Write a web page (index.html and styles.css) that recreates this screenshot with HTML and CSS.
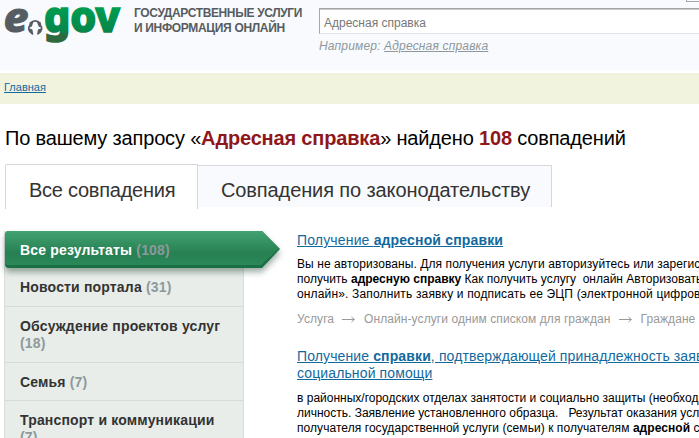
FILE: index.html
```html
<!DOCTYPE html>
<html lang="ru">
<head>
<meta charset="utf-8">
<title>Поиск</title>
<link rel="stylesheet" href="styles.css">
</head>
<body>
<header class="header">
  <svg class="logo" width="122" height="46" viewBox="0 0 122 46">
    <defs>
      <linearGradient id="green" x1="0" y1="7" x2="0" y2="43" gradientUnits="userSpaceOnUse">
        <stop offset="0" stop-color="#009d50"/><stop offset=".67" stop-color="#07864a"/><stop offset=".78" stop-color="#2c693f"/><stop offset="1" stop-color="#2c693f"/>
      </linearGradient>
    </defs>
    <text class="logo-e" x="3.500" y="32" textLength="25" lengthAdjust="spacingAndGlyphs">e</text>
    <text class="logo-gov" x="44" y="31.500" textLength="76" lengthAdjust="spacingAndGlyphs" fill="url(#green)" stroke="url(#green)">gov</text>
    <g fill="none" stroke="#555d62" stroke-width="1.600">
      <path d="M33 34.200a6.500 6.500 0 0 1-4-8M37.400 34.200a6.500 6.500 0 0 0 4-8"/>
      <path d="M30 23.400q5.200-5 10.400 0" stroke-width="1.500"/>
    </g>
    <path fill="#555d62" d="M28.400 27.600l1.400-5 4-1.800-1.600 4.600-1 1.600zM42 27.600l-1.400-5-4-1.800 1.600 4.600 1 1.600zM28.400 28l4 1.500.9 4.700-3.600-2.200zM42 28l-4 1.500-.9 4.700 3.600-2.200z"/>
  </svg>
  <div class="slogan"><span class="s1">ГОСУДАРСТВЕННЫЕ УСЛУГИ</span><br><span class="s2">И ИНФОРМАЦИЯ ОНЛАЙН</span></div>
  <div class="search">
    <div class="field">Адресная справка</div>
    <div class="hint">Например: <u>Адресная справка</u></div>
    <i class="button-edge"></i>
  </div>
</header>
<nav class="crumbs"><a>Главная</a></nav>
<main>
  <h1>По вашему запросу «<b>Адресная справка</b>» найдено <b>108</b> совпадений</h1>
  <div class="tabs">
    <div class="tab current">Все совпадения</div>
    <div class="tab other">Совпадения по законодательству</div>
  </div>
  <div class="columns">
    <aside class="menu">
      <div class="item active">
        <svg class="arrow" width="276" height="38" viewBox="0 0 276 38">
          <defs><linearGradient id="bar" x1="0" y1="0" x2="0" y2="1"><stop offset="0" stop-color="#43a271"/><stop offset=".65" stop-color="#278052"/><stop offset="1" stop-color="#2b8859"/></linearGradient></defs>
          <path fill="#187044" d="M4 0H257L275 18 257 37H4Q0 37 0 33V4Q0 0 4 0Z"/>
          <path fill="url(#bar)" d="M4 0H257L274 17.500 256 34H3Q0 34 0 31V4Q0 0 4 0Z"/>
        </svg>
        <span class="label">Все результаты <em>(108)</em></span>
      </div>
      <div class="item">Новости портала <em>(31)</em></div>
      <div class="item">Обсуждение проектов услуг <em>(18)</em></div>
      <div class="item">Семья <em>(7)</em></div>
      <div class="item">Транспорт и коммуникации <em>(7)</em></div>
    </aside>
    <section class="results">
      <article>
        <h2><a>Получение <b>адресной справки</b></a></h2>
        <p><span class="a1">Вы не авторизованы. Для получения услуги авторизуйтесь или зарегистрируйтесь</span><br><span class="a2">получить <b>адресную справку</b> Как получить услугу&nbsp; онлайн Авторизоваться</span><br><span class="a3">онлайн». Заполнить заявку и подписать ее ЭЦП (электронной цифровой</span></p>
        <div class="path"><span>Услуга</span><svg width="14" height="9"><path d="M0 4.500H12M9.500 2L12.500 4.500 9.500 7"/></svg><span>Онлайн-услуги одним списком для граждан</span><svg width="14" height="9"><path d="M0 4.500H12M9.500 2L12.500 4.500 9.500 7"/></svg><span>Граждане</span></div>
      </article>
      <article>
        <h2><a>Получение <b>справки</b>, подтверждающей принадлежность заявителя<br>социальной помощи</a></h2>
        <p><span class="b1">в районных/городских отделах занятости и социально защиты (необходимо</span><br><span class="b2">личность. Заявление установленного образца.&nbsp;&nbsp; Результат оказания услуги</span><br><span class="b3">получателя государственной услуги (семьи) к получателям <b>адресной</b> социальной</span></p>
      </article>
    </section>
  </div>
</main>
</body>
</html>
```
FILE: styles.css
```css
* { box-sizing: border-box; }
body { margin: 0; width: 699px; height: 438px; overflow: hidden; background: #fff; color: #000; font-family: "Liberation Sans", Arial, sans-serif; white-space: nowrap; }
.header { display: flex; height: 70px; background: #f8fafd; overflow: hidden; }
.logo { flex: none; }
.logo-e { font: italic 800 41px "Noto Sans", sans-serif; fill: #555d62; stroke: #555d62; stroke-width: 1px; }
.logo-gov { font: 800 42px "Noto Sans", sans-serif; stroke-width: 1.6px; }
.slogan { width: 185px; flex: none; margin-left: 12px; padding-top: 6px; font-size: 12px; line-height: 15px; font-weight: bold; color: #575c61; }
.s1 { letter-spacing: -.37px; }
.s2 { letter-spacing: -.33px; }
.search { position: relative; flex: 1; padding-top: 8px; }
.field { height: 26px; padding-left: 4px; border: 1px solid #a4a7aa; border-width: 1px 0 1px 1px; border-bottom-color: #dfe1e4; background: #fff; box-shadow: inset 0 1px 0 #c9cbcd; font-size: 12px; line-height: 28px; color: #777; }
.hint { margin-top: 5px; font-size: 12px; line-height: 15px; letter-spacing: .17px; font-style: italic; color: #8d989c; }
.button-edge { position: absolute; right: 0; top: 0; width: 13px; height: 2px; border: solid #a4a7aa; border-width: 0 0 1px 1px; }
.crumbs { margin-top: 3px; height: 31px; padding: 7px 4px 0; background: #f1f3de; font-size: 11px; line-height: 15px; }
a { color: #12699e; text-decoration: underline; }
h1 { margin: 22px 0 0 5px; height: 38px; font-size: 20px; line-height: 24px; letter-spacing: -.17px; font-weight: normal; }
h1 b { color: #8f171b; }
.tabs { display: flex; margin-left: 5px; height: 45px; font-size: 20px; color: #333; }
.tab { border: 1px solid #d5d7da; border-bottom: 0; padding-left: 23px; line-height: 50px; }
.current { width: 193px; border-radius: 2px 0 0; letter-spacing: -.25px; }
.other { width: 354px; height: 42px; margin-top: 1px; border-left: 0; background: #f8fafd; line-height: 48px; letter-spacing: -.11px; }
.columns { display: flex; margin: 22px 0 0 4px; }
.menu { width: 240px; flex: none; background: #e8ede9; border: solid #d9dedb; border-width: 0 1px; font-size: 14px; line-height: 17px; letter-spacing: .17px; font-weight: bold; color: #333; white-space: normal; }
.item { padding: 11px 15px 10px; border-bottom: 1px solid #d5dbd7; }
.item:nth-child(n+4) { padding: 11px 15px 9px; }
.item em { font-style: normal; color: #8e999c; }
.active { position: relative; height: 37px; border: 0; color: #fff; }
.arrow { position: absolute; left: 0; top: 0; filter: drop-shadow(0 4px 3px rgba(0, 45, 20, .4)); }
.label { position: relative; }
.results { margin-left: 53px; padding-top: 1px; }
h2 { margin: 0; font-size: 14px; line-height: 17px; letter-spacing: .16px; font-weight: normal; }
p { margin: 8px 0 0; font-size: 12px; line-height: 15px; }
.a1 { letter-spacing: .08px; }
.a3 { letter-spacing: .16px; }
.b3 { letter-spacing: .06px; }
.path { display: flex; align-items: center; gap: 8px; margin: 9px 0 0; height: 16px; font-size: 12px; letter-spacing: .08px; color: #999; }
.path svg { fill: none; stroke: #999; }
article + article { margin-top: 21px; }
article + article h2 { letter-spacing: .12px; }
article + article p { margin-top: 9px; }
```
